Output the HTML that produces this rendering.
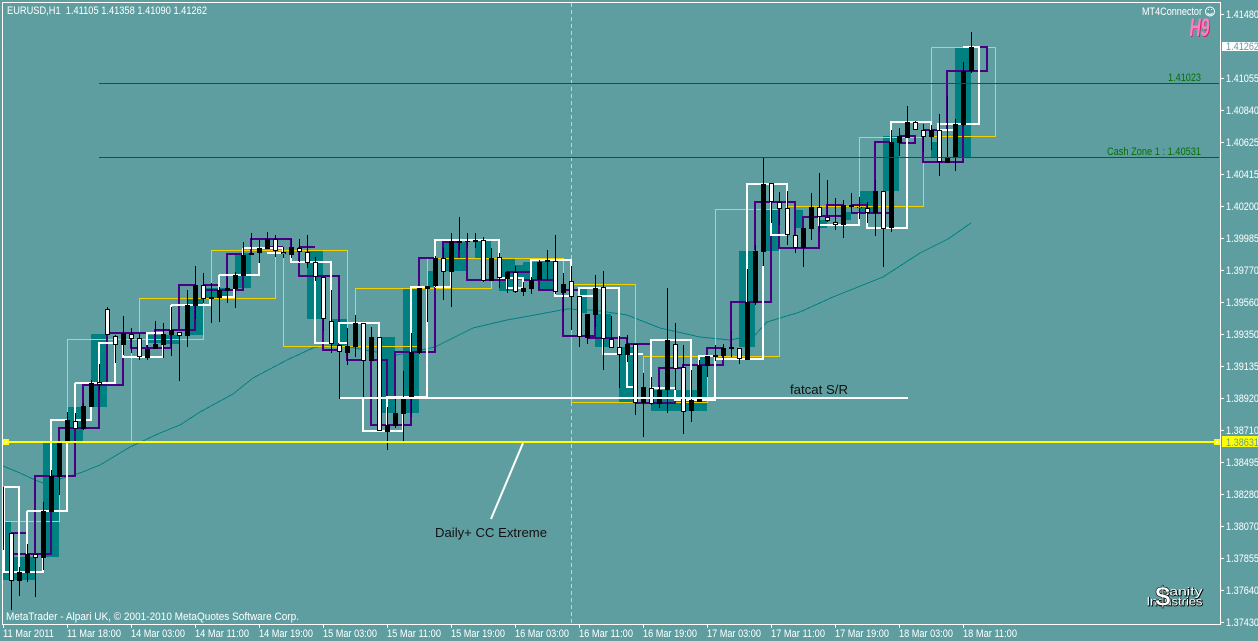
<!DOCTYPE html>
<html><head><meta charset="utf-8"><title>EURUSD,H1</title>
<style>
html,body{margin:0;padding:0;width:1258px;height:641px;overflow:hidden;background:#5F9EA0}
svg{display:block}
text{font-family:"Liberation Sans",sans-serif;font-size:11px;fill:#fff}
</style></head><body>
<svg width="1258" height="641" viewBox="0 0 1258 641" xmlns="http://www.w3.org/2000/svg">
<rect width="1258" height="641" fill="#5F9EA0"/>
<g shape-rendering="crispEdges">
<!-- teal -->
<path fill="#008080" d="M3 522h8v58h-8zM11 557h24v23h-24zM43 443h16v114h-16zM67 407h16v34h-16zM91 334h16v73h-16zM146 335h33v8h-33zM163 335h17v9h-17zM195 305h8v30h-8zM187 298h16v37h-16zM203 288h24v10h-24zM235 253h16v35h-16zM307 251h16v68h-16zM331 319h16v26h-16zM379 337h16v76h-16zM403 289h16v124h-16zM428 271h7v16h-7zM443 242h24v29h-24zM475 241h16v17h-16zM499 258h16v33h-16zM515 265h8v15h-8zM523 262h16v18h-16zM539 260h16v30h-16zM580 289h7v24h-7zM595 314h16v33h-16zM619 347h16v56h-16zM651 390h26v21h-26zM668 390h39v21h-39zM699 357h8v54h-8zM739 251h16v96h-16zM763 209h16v42h-16zM795 210h8v18h-8zM820 220h7v8h-7zM843 212h8v8h-8zM859 191h16v22h-16zM883 136h16v55h-16zM931 142h8v15h-8zM955 47h16v110h-16z"/>
<!-- price line + dashed -->
<rect x="3" y="47" width="1217" height="1" fill="#808c94"/>
<path d="M571.5 3V624" stroke="#f0d830" stroke-width="1" stroke-dasharray="4 3" fill="none"/>
<!-- MA -->
<polyline fill="none" stroke="#008080" stroke-width="1" points="3,466 20,473 35,480 43,483 60,479 80,473 100,465 130,447 160,433 180,425 200,412 233,394 253,378 287,360 315,347 340,345 370,351 397,355 435,347 473,328 507,320 540,314 567,309 593,310 627,315 660,328 700,337 730,340 755,335 767,322 800,312 833,297 883,277 920,253 948,239 971,223"/>
</g>
<g shape-rendering="crispEdges" fill="none">
<!-- yellow -->
<path stroke="#f5d000" stroke-width="1" d="M3.5 521.5H59.5V495M67.5 420V339.5H203.5V298M131.5 339V441M139.5 340V298.5H275.5V250M211.5 290V250.5H347.5V346.5H283.5V252M355.5 323V288.5H491.5V258M340 346.5H419M427.5 287V258.5H563.5V285M571.5 402.5V284.5H635.5V347M571 402.5H707.5V356.5H643.5V403M715.5 356.5V209.5H779.5V356.5H715.5M788 206.5H923.5V137.5H859.5V206M931.5 47.5H995.5V136.5H931.5V47.5"/>
<!-- purple -->
<path stroke="#4B0082" stroke-width="2" d="M11 533H27M11 554H51V511M35 554V476H75V429M59 441V428H99V385M83 406V385H123V333M107 383V333H147V348M131 333V348H171V330M155 345V330H195V285H179V330H171M203 285H219M206 290H243V254H227V288M251 254V239H291V247M267 247H283M299 247H315M299 247V276H339V345M323 276V350H339M347 346V360H363M371 360H387V400M371 360V425H411V397M395 397V352H435V287M419 288V258H435M443 258V242H459V258M467 242V280H507V272H531M523 280H555V290H539V280M563 284V336H595V314M563 290H579M587 338H627V344H650M635 403H675V390M659 403V368H683V365H699M699 365H723V348H707V356M731 348V302H771V202H755V250M755 202H795V235M779 209V248H819V217H803V228M819 216H843V205H827V217M851 213H891V142H875V191M851 205H867V213M899 136H915V143H899M923 130H939M923 130V162H963V125M947 130V71H987V47H971"/>
<!-- white -->
<path stroke="#fff" stroke-width="2" d="M4 487H19V572M4 487V572H43V511M27 511H67V420H51V476M27 511V554M75 383H115V343H99V383M75 383V420H91V383M123 345V357H163V333H147V345M171 305H210V297M171 305V330M219 275H259V263M219 275V297H234V288M243 248H283V253H267M243 248V255M291 253V262H331V343H315V262M339 343V323H379V337M339 343H347M363 398V431H403V398M387 431V397H427V287H411V352M435 258V240H499V278H507V288H523V278H507M435 287H451V272M435 258V287M531 280V260H571V296H555V281M579 296V288H619V354H603V339M579 296H595M627 354H643M627 354V387H635M651 388V340H691V400M651 388H675M675 390V400H715V356H699V365M715 359H763V266M747 360V184H787V235H771V202M819 212V225H859V213M867 213V228H907V138M891 142V122H931V130M938 130V124H979V47H963M938 130H955"/>
<!-- wicks -->
<path stroke="#000" stroke-width="1" d="M3.5 487V550M11.5 533V610M19.5 567V596M27.5 544V582M35.5 554V597M43.5 502V570M51.5 470V512M59.5 441V495M67.5 412V442M75.5 413V429M83.5 403V430M91.5 380V407M99.5 364V390M107.5 307V335M115.5 335V363M123.5 316V355M131.5 328V353M139.5 334V360M147.5 345V360M155.5 321V349M163.5 323V358M171.5 307V356M179.5 332V381M187.5 290V347M195.5 266V319M203.5 273V303M211.5 283V323M219.5 287V322M227.5 278V303M235.5 272V308M243.5 242V276M251.5 233V255M259.5 240V263M267.5 232V249M275.5 235V257M283.5 247V258M291.5 239V258M299.5 239V262M307.5 235V268M315.5 257V281M323.5 277V331M331.5 290V353M339.5 345V399M347.5 328V365M355.5 315V357M363.5 323V399M371.5 327V361M379.5 337V431M387.5 407V450M395.5 397V428M403.5 371V442M411.5 333V417M419.5 288V354M427.5 286V322M435.5 256V287M443.5 248V300M451.5 233V307M459.5 217V250M467.5 233V248M475.5 233V248M483.5 237V282M491.5 248V281M499.5 253V288M507.5 271V293M515.5 266V293M523.5 282V296M531.5 277V294M539.5 260V280M547.5 250V280M555.5 235V294M563.5 273V312M571.5 266V330M579.5 296V347M587.5 314V344M595.5 275V327M603.5 271V370M611.5 316V348M619.5 336V388M627.5 335V362M635.5 344V415M643.5 373V437M651.5 377V405M659.5 385V408M667.5 288V413M675.5 323V390M683.5 345V434M691.5 370V422M699.5 360V402M707.5 356V377M715.5 345V361M723.5 344V360M731.5 331V357M739.5 348V364M747.5 269V360M755.5 245V305M763.5 157V266M771.5 183V223M779.5 192V225M787.5 191V245M795.5 235V253M803.5 228V267M811.5 193V240M819.5 173V232M827.5 180V222M835.5 198V230M843.5 200V238M851.5 193V213M859.5 197V219M867.5 202V223M875.5 180V236M883.5 191V267M891.5 130V232M899.5 128V156M907.5 106V138M915.5 121V130M923.5 124V152M931.5 125V150M939.5 114V176M947.5 96V163M955.5 119V171M963.5 62V126M971.5 32V73"/>
<!-- bodies -->
<path stroke="#000" stroke-width="5" d="M11.5 533V581M19.5 572V581M27.5 554V573M35.5 554V558M43.5 511V558M51.5 476V512M59.5 441V477M67.5 420V442M75.5 421V429M83.5 406V429M91.5 383V407M99.5 382V385M107.5 309V335M115.5 336V345M123.5 333V345M131.5 334V339M139.5 338V357M147.5 349V358M155.5 344V349M163.5 334V345M171.5 330V335M179.5 332V336M187.5 305V336M195.5 285V306M203.5 285V299M211.5 297V299M219.5 290V298M227.5 288V291M235.5 275V289M243.5 255V276M251.5 253V255M259.5 248V253M267.5 239V249M275.5 239V251M283.5 252V254M291.5 247V255M299.5 248V252M307.5 252V263M315.5 262V277M323.5 277V319M331.5 321V344M339.5 345V352M347.5 346V353M355.5 323V347M363.5 323V361M371.5 337V361M379.5 337V431M387.5 425V432M395.5 413V426M403.5 397V414M411.5 352V397M419.5 288V353M427.5 286V289M435.5 258V286M443.5 258V272M451.5 241V272M459.5 241V243M467.5 241V242M475.5 240V242M483.5 240V281M491.5 258V281M499.5 257V278M507.5 272V279M515.5 272V292M523.5 288V292M531.5 280V289M539.5 262V280M547.5 260V262M555.5 261V292M563.5 284V293M571.5 281V297M579.5 296V337M587.5 314V338M595.5 288V315M603.5 287V339M611.5 339V348M619.5 347V355M627.5 344V355M635.5 344V403M643.5 387V403M651.5 388V404M659.5 390V404M667.5 340V390M675.5 344V369M683.5 367V412M691.5 400V411M699.5 365V402M707.5 356V366M715.5 355V357M723.5 348V356M731.5 347V349M739.5 348V359M747.5 302V360M755.5 251V303M763.5 184V252M771.5 183V202M779.5 202V209M787.5 208V235M795.5 235V248M803.5 228V248M811.5 207V229M819.5 207V217M827.5 217V221M835.5 222V225M843.5 205V225M851.5 205V207M859.5 207V208M867.5 208V213M875.5 191V213M883.5 191V229M891.5 142V228M899.5 136V143M907.5 122V138M915.5 122V130M923.5 130V137M931.5 130V137M939.5 130V162M947.5 157V163M955.5 124V158M963.5 71V125M971.5 47V71"/>
<path stroke="#fff" stroke-width="3" d="M11.5 534V580M35.5 555V557M75.5 422V428M99.5 383V384M107.5 310V334M115.5 337V344M131.5 335V338M139.5 339V356M179.5 333V335M203.5 286V298M275.5 240V250M283.5 253V253.5M299.5 249V251M307.5 253V262M315.5 263V276M323.5 278V318M331.5 322V343M339.5 346V351M363.5 324V360M379.5 338V430M443.5 259V271M483.5 241V280M499.5 258V277M515.5 273V291M555.5 262V291M571.5 282V296M579.5 297V336M603.5 288V338M611.5 340V347M619.5 348V354M635.5 345V402M651.5 389V403M675.5 345V368M683.5 368V411M739.5 349V358M771.5 184V201M779.5 203V208M787.5 209V234M795.5 236V247M819.5 208V216M827.5 218V220M835.5 223V224M859.5 207.5V207.8M867.5 209V212M883.5 192V228M915.5 123V129M923.5 131V136M939.5 131V161"/>
<!-- horizontal lines -->
<rect x="99" y="83" width="1120" height="1" fill="#006030"/>
<rect x="99" y="157" width="1120" height="1" fill="#006030"/>
<rect x="340" y="397" width="568" height="2" fill="#fff"/>
<rect x="4" y="441" width="1215" height="2" fill="#ffff00"/>
<rect x="3" y="439" width="6" height="6" fill="#ffff00"/><rect x="5" y="441" width="2" height="2" fill="#fff"/>
<rect x="1214" y="439" width="6" height="6" fill="#ffff00"/><rect x="1216" y="441" width="2" height="2" fill="#fff"/>
<!-- frame -->
<path stroke="#fff" stroke-width="1" d="M2.5 2.5H1220.5V624.5H2.5V2.5"/>
<!-- ticks -->
<path stroke="#fff" stroke-width="1" d="M1221 14.5h3M1221 78.5h3M1221 110.5h3M1221 142.5h3M1221 174.5h3M1221 206.5h3M1221 238.5h3M1221 270.5h3M1221 302.5h3M1221 334.5h3M1221 366.5h3M1221 398.5h3M1221 430.5h3M1221 462.5h3M1221 494.5h3M1221 526.5h3M1221 558.5h3M1221 590.5h3M1221 622.5h3M3.5 625v3M67.5 625v3M131.5 625v3M195.5 625v3M259.5 625v3M323.5 625v3M387.5 625v3M451.5 625v3M515.5 625v3M579.5 625v3M643.5 625v3M707.5 625v3M771.5 625v3M835.5 625v3M899.5 625v3M963.5 625v3"/>
<rect x="1222" y="42" width="36" height="9" fill="#fff"/>
<rect x="1222" y="436" width="36" height="11" fill="#ffff00"/>
</g>
<!-- daily line -->
<path d="M523 443L491 519" stroke="#fff" stroke-width="2" fill="none"/>
<!-- text -->
<g>
<text x="7" y="14" textLength="200" lengthAdjust="spacingAndGlyphs" xml:space="preserve">EURUSD,H1  1.41105 1.41358 1.41090 1.41262</text>
<text x="6" y="620" textLength="293" lengthAdjust="spacingAndGlyphs">MetaTrader - Alpari UK, © 2001-2010 MetaQuotes Software Corp.</text>
<text x="1142" y="15" textLength="60" lengthAdjust="spacingAndGlyphs">MT4Connector</text>
<text x="1168" y="81" textLength="33" lengthAdjust="spacingAndGlyphs" style="fill:#007000">1.41023</text>
<text x="1107" y="155" textLength="94" lengthAdjust="spacingAndGlyphs" style="fill:#007000">Cash Zone 1 : 1.40531</text>
<text x="435" y="537" textLength="112" lengthAdjust="spacingAndGlyphs" style="font-size:13px;fill:#111">Daily+ CC Extreme</text>
<text x="790" y="394" textLength="58" lengthAdjust="spacingAndGlyphs" style="font-size:13px;fill:#111">fatcat S/R</text>
</g>
<!-- axis labels -->
<g>
<text x="1226" y="18" textLength="33" lengthAdjust="spacingAndGlyphs">1.41480</text>
<text x="1226" y="50" textLength="33" lengthAdjust="spacingAndGlyphs" style="fill:#5F9EA0">1.41262</text>
<text x="1226" y="82" textLength="33" lengthAdjust="spacingAndGlyphs">1.41055</text>
<text x="1226" y="114" textLength="33" lengthAdjust="spacingAndGlyphs">1.40840</text>
<text x="1226" y="146" textLength="33" lengthAdjust="spacingAndGlyphs">1.40625</text>
<text x="1226" y="178" textLength="33" lengthAdjust="spacingAndGlyphs">1.40415</text>
<text x="1226" y="210" textLength="33" lengthAdjust="spacingAndGlyphs">1.40200</text>
<text x="1226" y="242" textLength="33" lengthAdjust="spacingAndGlyphs">1.39985</text>
<text x="1226" y="274" textLength="33" lengthAdjust="spacingAndGlyphs">1.39770</text>
<text x="1226" y="306" textLength="33" lengthAdjust="spacingAndGlyphs">1.39560</text>
<text x="1226" y="338" textLength="33" lengthAdjust="spacingAndGlyphs">1.39350</text>
<text x="1226" y="370" textLength="33" lengthAdjust="spacingAndGlyphs">1.39135</text>
<text x="1226" y="402" textLength="33" lengthAdjust="spacingAndGlyphs">1.38920</text>
<text x="1226" y="434" textLength="33" lengthAdjust="spacingAndGlyphs">1.38710</text>
<text x="1226" y="446" textLength="33" lengthAdjust="spacingAndGlyphs" style="fill:#5F9EA0">1.38631</text>
<text x="1226" y="466" textLength="33" lengthAdjust="spacingAndGlyphs">1.38495</text>
<text x="1226" y="498" textLength="33" lengthAdjust="spacingAndGlyphs">1.38280</text>
<text x="1226" y="530" textLength="33" lengthAdjust="spacingAndGlyphs">1.38070</text>
<text x="1226" y="562" textLength="33" lengthAdjust="spacingAndGlyphs">1.37855</text>
<text x="1226" y="594" textLength="33" lengthAdjust="spacingAndGlyphs">1.37640</text>
<text x="1226" y="626" textLength="33" lengthAdjust="spacingAndGlyphs">1.37430</text>
<text x="3" y="637" textLength="51" lengthAdjust="spacingAndGlyphs">11 Mar 2011</text>
<text x="67" y="637" textLength="54" lengthAdjust="spacingAndGlyphs">11 Mar 18:00</text>
<text x="131" y="637" textLength="54" lengthAdjust="spacingAndGlyphs">14 Mar 03:00</text>
<text x="195" y="637" textLength="54" lengthAdjust="spacingAndGlyphs">14 Mar 11:00</text>
<text x="259" y="637" textLength="54" lengthAdjust="spacingAndGlyphs">14 Mar 19:00</text>
<text x="323" y="637" textLength="54" lengthAdjust="spacingAndGlyphs">15 Mar 03:00</text>
<text x="387" y="637" textLength="54" lengthAdjust="spacingAndGlyphs">15 Mar 11:00</text>
<text x="451" y="637" textLength="54" lengthAdjust="spacingAndGlyphs">15 Mar 19:00</text>
<text x="515" y="637" textLength="54" lengthAdjust="spacingAndGlyphs">16 Mar 03:00</text>
<text x="579" y="637" textLength="54" lengthAdjust="spacingAndGlyphs">16 Mar 11:00</text>
<text x="643" y="637" textLength="54" lengthAdjust="spacingAndGlyphs">16 Mar 19:00</text>
<text x="707" y="637" textLength="54" lengthAdjust="spacingAndGlyphs">17 Mar 03:00</text>
<text x="771" y="637" textLength="54" lengthAdjust="spacingAndGlyphs">17 Mar 11:00</text>
<text x="835" y="637" textLength="54" lengthAdjust="spacingAndGlyphs">17 Mar 19:00</text>
<text x="899" y="637" textLength="54" lengthAdjust="spacingAndGlyphs">18 Mar 03:00</text>
<text x="963" y="637" textLength="54" lengthAdjust="spacingAndGlyphs">18 Mar 11:00</text>
</g>
<!-- smiley -->
<circle cx="1210" cy="11.5" r="4.5" fill="none" stroke="#fff" stroke-width="1"/>
<path d="M1207.5 13c1 2 4 2 5 0" fill="none" stroke="#fff" stroke-width="1"/>
<rect x="1208" y="9" width="1" height="1" fill="#fff"/><rect x="1211" y="9" width="1" height="1" fill="#fff"/>
<!-- H9 -->
<text x="1190.5" y="37" textLength="20" lengthAdjust="spacingAndGlyphs" style="font-size:25px;font-style:italic;fill:#e0105a">H9</text>
<text x="1189.5" y="36" textLength="20" lengthAdjust="spacingAndGlyphs" style="font-size:25px;font-style:italic;font-weight:bold;fill:#ff80c0">H9</text>
<!-- logo -->
<text x="1162" y="596" textLength="41" lengthAdjust="spacingAndGlyphs" style="font-size:12px;fill:#000" stroke="#000" stroke-width=".8">sanity</text>
<text x="1161.5" y="595.5" textLength="41" lengthAdjust="spacingAndGlyphs" style="font-size:12px">sanity</text>
<text x="1147" y="606" textLength="56" lengthAdjust="spacingAndGlyphs" style="font-size:12px;fill:#000" stroke="#000" stroke-width=".8">Industries</text>
<text x="1146.5" y="605.5" textLength="56" lengthAdjust="spacingAndGlyphs" style="font-size:12px">Industries</text>
<text x="1155" y="606" style="font-size:28px;font-weight:bold;fill:#fff" stroke="#000" stroke-width=".6">$</text>
</svg>
</body></html>
